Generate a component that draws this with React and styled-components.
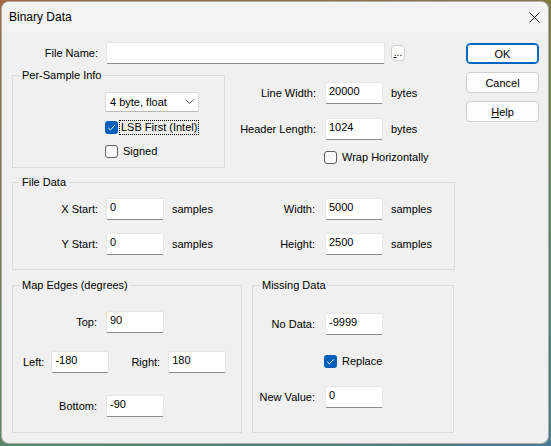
import React from 'react'
import styled, { createGlobalStyle } from 'styled-components'

const GlobalStyle = createGlobalStyle`
  html, body {
    margin: 0;
    padding: 0;
  }
  body {
    width: 551px;
    height: 446px;
    overflow: hidden;
    background: linear-gradient(160deg, #a3673a 0%, #7d7c45 35%, #5e8a5a 60%, #4a7a8e 100%);
    font-family: "Liberation Sans", Arial, sans-serif;
    font-size: 11px;
    color: #000;
  }
`

const Window = styled.div`
  margin: 1px;
  width: 548px;
  height: 443px;
  box-sizing: border-box;
  border: 1px solid rgba(0, 0, 0, 0.28);
  border-radius: 8px;
  background: #f0f0f0;
  overflow: hidden;
  display: flex;
  flex-direction: column;
`

const TitleBar = styled.div`
  height: 30px;
  flex: none;
  display: flex;
  align-items: center;
  justify-content: space-between;
  padding: 0 8px 0 7px;
  background: #f3f3f3;
  font-size: 12px;
`

const Body = styled.div`
  display: flex;
  padding: 10px 10px 0 10px;
`

const Main = styled.div`
  width: 443px;
  display: flex;
  flex-direction: column;
`

const ButtonColumn = styled.div`
  margin: 1px 0 0 11px;
  display: flex;
  flex-direction: column;
  gap: 8px;
`

const Button = styled.button`
  width: 73px;
  height: 21px;
  box-sizing: border-box;
  padding: 0;
  font: inherit;
  color: #000;
  background: #fdfdfd;
  border: 1px solid ${p => (p.$default ? '#0067c0' : '#d0d0d0')};
  border-radius: 4px;
  box-shadow: ${p => (p.$default ? 'inset 0 0 0 1px #0067c0' : 'none')};
`

const SmallButton = styled(Button)`
  width: 14px;
  height: 16px;
  margin: 3px 0 0 6px;
  line-height: 10px;
  font-size: 10px;
  align-self: flex-start;
`

const Row = styled.div`
  display: flex;
  align-items: ${p => p.$align || 'center'};
  margin-top: ${p => p.$mt || 0}px;
  margin-left: ${p => p.$ml || 0}px;
`

const Label = styled.span`
  width: ${p => (p.$w ? `${p.$w}px` : 'auto')};
  flex: none;
  text-align: right;
  white-space: nowrap;
  margin-right: ${p => (p.$gap === undefined ? 8 : p.$gap)}px;
  margin-left: ${p => p.$ml || 0}px;
`

const TextBox = styled.input`
  width: ${p => p.$w || 58}px;
  height: 22px;
  box-sizing: border-box;
  margin: 0;
  padding: 1px 3px 5px;
  font: inherit;
  color: #000;
  background: #fff;
  border: 1px solid #e6e6e6;
  border-bottom-color: #8a8a8a;
  border-radius: 2px;
  outline: none;
`

const Unit = styled.span`
  margin-left: 8px;
  white-space: nowrap;
`

const Group = styled.fieldset`
  margin: 0;
  min-width: 0;
  box-sizing: border-box;
  width: ${p => p.$w}px;
  padding: ${p => p.$pt || 10}px 0 ${p => p.$pb || 10}px 0;
  border: 1px solid #dcdcdc;
  display: flex;
  flex-direction: column;
`

const Legend = styled.legend`
  margin-left: 7px;
  padding: 0 2px;
  line-height: 13px;
`

const Indented = styled.div`
  padding-left: ${p => p.$pl}px;
  display: flex;
  flex-direction: column;
`

const Select = styled.div`
  width: 94px;
  height: 20px;
  box-sizing: border-box;
  display: flex;
  align-items: center;
  justify-content: space-between;
  padding: 0 4px 1px 4px;
  background: #fff;
  border: 1px solid #dadada;
  border-bottom-color: #b8b8b8;
  border-radius: 2px;
`

const CheckRow = styled.div`
  display: flex;
  align-items: center;
  height: 14px;
  margin-top: ${p => p.$mt || 0}px;
  margin-left: ${p => p.$ml || 0}px;
  svg {
    flex: none;
  }
`

const CheckText = styled.span`
  margin-left: ${p => (p.$focus ? 2 : 4)}px;
  padding: 0 1px;
  line-height: 13px;
  outline: ${p => (p.$focus ? '1px dotted #000' : 'none')};
`

const RightBlock = styled.div`
  padding-top: 13px;
  display: flex;
  flex-direction: column;
`

const DataGrid = styled.div`
  display: grid;
  grid-template-columns: 85px 58px 72px 65px 58px auto;
  column-gap: 8px;
  row-gap: 13px;
  align-items: center;
  & > span:nth-child(6n + 4) {
    text-align: right;
    padding-right: 2px;
  }
  & > span:nth-child(6n + 1) {
    text-align: right;
  }
`

const PairRow = styled.div`
  display: flex;
  gap: 10px;
  margin-top: 9px;
`

function CheckBox({ checked }) {
  return (
    <svg width="13" height="13" viewBox="0 0 13 13">
      {checked ? (
        <>
          <rect x="0" y="0" width="13" height="13" rx="3" fill="#005fb8" />
          <path d="M3.3 6.9 L5.4 8.9 L9.7 4.4" fill="none" stroke="#fff" strokeWidth="1" />
        </>
      ) : (
        <rect x="0.5" y="0.5" width="12" height="12" rx="2.5" fill="#fbfbfb" stroke="#5f5f5f" />
      )}
    </svg>
  )
}

function Check({ checked, focus, children, mt, ml }) {
  return (
    <CheckRow $mt={mt} $ml={ml}>
      <CheckBox checked={checked} />
      <CheckText $focus={focus}>{children}</CheckText>
    </CheckRow>
  )
}

export default function App() {
  return (
    <>
      <GlobalStyle />
      <Window>
        <TitleBar>
          <span>Binary Data</span>
          <svg width="11" height="11" viewBox="0 0 11 11">
            <path d="M0.5 0.5 L10.5 10.5 M10.5 0.5 L0.5 10.5" stroke="#1b1b1b" strokeWidth="1" />
          </svg>
        </TitleBar>
        <Body>
          <Main>
            <Row $align="flex-start">
              <Label $w={86} style={{ alignSelf: 'center' }}>File Name:</Label>
              <TextBox $w={279} defaultValue="" />
              <SmallButton><u>.</u>..</SmallButton>
            </Row>

            <Row $align="flex-start" $mt={5}>
              <Group $w={213} $pt={10} $pb={9}>
                <Legend>Per-Sample Info</Legend>
                <Indented $pl={92}>
                  <Select>
                    <span>4 byte, float</span>
                    <svg width="9" height="5" viewBox="0 0 9 5">
                      <path d="M0.5 0.5 L4.5 4.5 L8.5 0.5" fill="none" stroke="#606060" strokeWidth="1" />
                    </svg>
                  </Select>
                  <Check checked focus mt={8}>LSB First (Intel)</Check>
                  <Check mt={10}>Signed</Check>
                </Indented>
              </Group>
              <RightBlock>
                <Row>
                  <Label $w={91} $gap={9}>Line Width:</Label>
                  <TextBox defaultValue="20000" />
                  <Unit>bytes</Unit>
                </Row>
                <Row $mt={14}>
                  <Label $w={91} $gap={9}>Header Length:</Label>
                  <TextBox defaultValue="1024" />
                  <Unit>bytes</Unit>
                </Row>
                <Check ml={99} mt={10}>Wrap Horizontally</Check>
              </RightBlock>
            </Row>

            <Row $mt={8}>
              <Group $w={443} $pt={9} $pb={14}>
                <Legend>File Data</Legend>
                <DataGrid>
                  <span>X Start:</span>
                  <TextBox defaultValue="0" />
                  <span>samples</span>
                  <span>Width:</span>
                  <TextBox defaultValue="5000" />
                  <span>samples</span>
                  <span>Y Start:</span>
                  <TextBox defaultValue="0" />
                  <span>samples</span>
                  <span>Height:</span>
                  <TextBox defaultValue="2500" />
                  <span>samples</span>
                </DataGrid>
              </Group>
            </Row>

            <PairRow>
              <Group $w={230} $pt={19} $pb={15}>
                <Legend>Map Edges (degrees)</Legend>
                <Row>
                  <Label $w={84} $gap={9}>Top:</Label>
                  <TextBox defaultValue="90" />
                </Row>
                <Row $mt={18}>
                  <Label $ml={10} $gap={7}>Left:</Label>
                  <TextBox defaultValue="-180" />
                  <Label $ml={22} $gap={8}>Right:</Label>
                  <TextBox defaultValue="180" />
                </Row>
                <Row $mt={22}>
                  <Label $w={84} $gap={9}>Bottom:</Label>
                  <TextBox defaultValue="-90" />
                </Row>
              </Group>
              <Group $w={202} $pt={21} $pb={15}>
                <Legend>Missing Data</Legend>
                <Row>
                  <Label $w={62} $gap={10}>No Data:</Label>
                  <TextBox defaultValue="-9999" />
                </Row>
                <Check checked ml={71} mt={19}>Replace</Check>
                <Row $mt={18}>
                  <Label $w={62} $gap={10}>New Value:</Label>
                  <TextBox defaultValue="0" />
                </Row>
              </Group>
            </PairRow>
          </Main>
          <ButtonColumn>
            <Button $default>OK</Button>
            <Button>Cancel</Button>
            <Button><u>H</u>elp</Button>
          </ButtonColumn>
        </Body>
      </Window>
    </>
  )
}
